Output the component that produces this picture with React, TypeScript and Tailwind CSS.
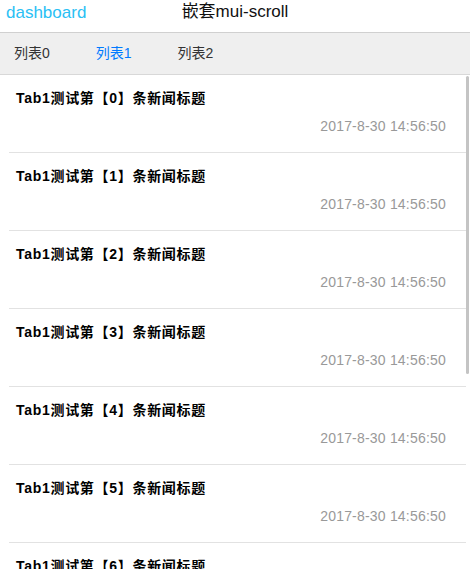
import React from "react";

const font = { fontFamily: '"Liberation Sans", Arial, "Noto Sans CJK SC", sans-serif' };

export default function App() {
  const items = [0, 1, 2, 3, 4, 5, 6];
  return (
    <div className="w-[470px] h-[569px] overflow-hidden bg-white relative" style={font}>
      <div className="h-[33px] border-b border-[#d0d0d0] flex items-center relative bg-white">
        <span className="pl-[6px] text-[17px] text-[#2ac0f4] leading-none -mt-[8px]">dashboard</span>
        <span className="absolute left-0 right-0 text-center text-[17px] text-[#111] leading-none top-[3px]">嵌套mui-scroll</span>
      </div>
      <div className="h-[42px] bg-[#efefef] border-b border-[#d8d8d8] flex items-center pl-[14px] gap-[46px] text-[14px] text-[#333]">
        <span>列表0</span>
        <span className="text-[#007aff]">列表1</span>
        <span>列表2</span>
      </div>
      <div className="relative">
        <div className="absolute right-[1px] top-[1px] w-[3px] h-[298px] rounded-full bg-[#c4c4c4]" />
        <div className="ml-[9px] mr-[4px]">
          {items.map((i) => (
            <div key={i} className="border-b border-[#e2e2e2] pt-[14px] pb-[16px] pl-[7px] pr-[20px]">
              <div className="text-[14px] leading-[20px] font-bold text-[#000] tracking-[0.7px] -mt-[1px]">Tab1测试第【{i}】条新闻标题</div>
              <div className="mt-[8px] text-[14px] leading-[20px] text-[#999] text-right tracking-[0.2px]">2017-8-30 14:56:50</div>
            </div>
          ))}
        </div>
      </div>
    </div>
  );
}
